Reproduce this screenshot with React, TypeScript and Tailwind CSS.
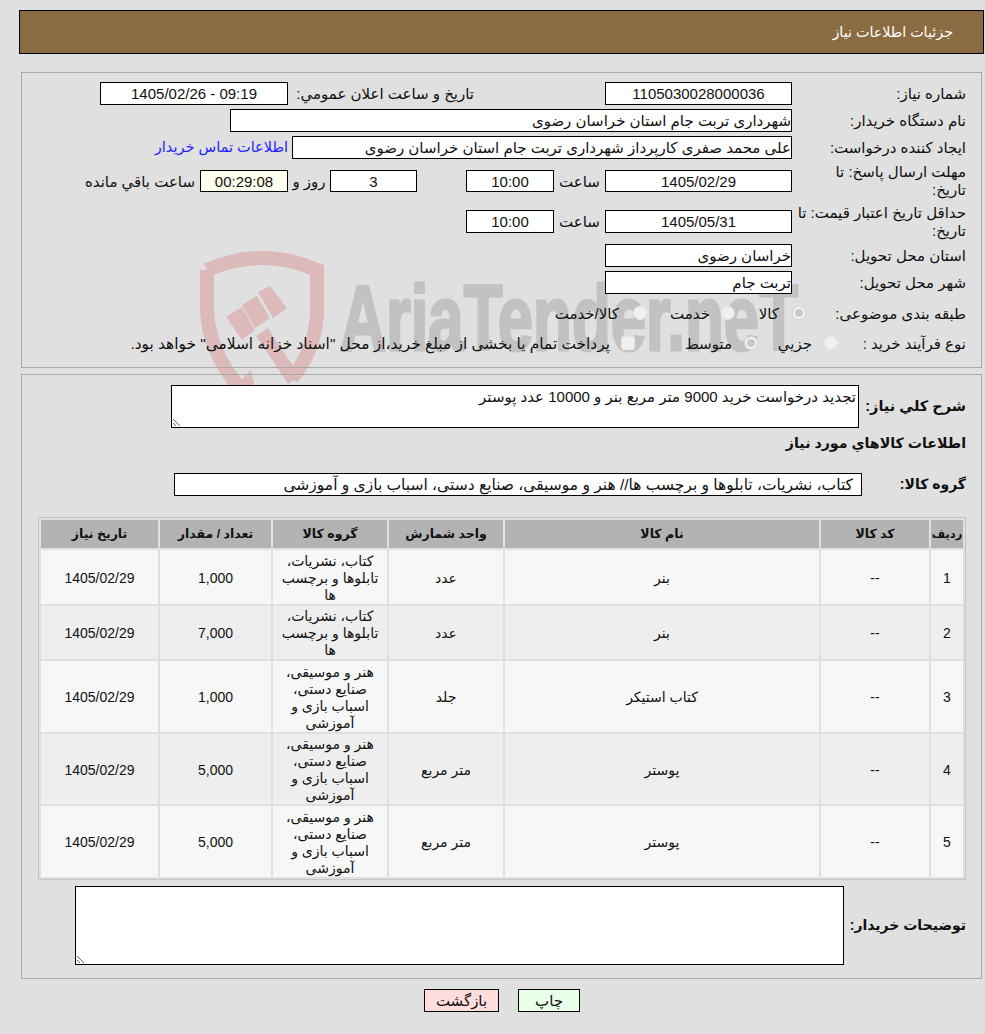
const rows = [
  { id: 1, name: "بنر", unit: "عدد", group: ["کتاب، نشریات،", "تابلوها و برچسب", "ها"], qty: "1,000", rowClass: "h-[54px] bg-[#f7f7f7]" },
  { id: 2, name: "بنر", unit: "عدد", group: ["کتاب، نشریات،", "تابلوها و برچسب", "ها"], qty: "7,000", rowClass: "h-[53px] bg-[#eeeeee]" },
  { id: 3, name: "کتاب استیکر", unit: "جلد", group: ["هنر و موسیقی،", "صنایع دستی،", "اسباب بازی و", "آموزشی"], qty: "1,000", rowClass: "h-[71px] bg-[#f7f7f7]" },
  { id: 4, name: "پوستر", unit: "متر مربع", group: ["هنر و موسیقی،", "صنایع دستی،", "اسباب بازی و", "آموزشی"], qty: "5,000", rowClass: "h-[70px] bg-[#eeeeee]" },
  { id: 5, name: "پوستر", unit: "متر مربع", group: ["هنر و موسیقی،", "صنایع دستی،", "اسباب بازی و", "آموزشی"], qty: "5,000", rowClass: "h-[71px] bg-[#f7f7f7]" },
];

function Box({ className, children }: { className: string; children?: React.ReactNode }) {
  return (
    <div className={"shrink-0 border border-black bg-white flex items-center justify-center h-[23px] " + className}>
      {children}
    </div>
  );
}

function Radio({ checked }: { checked?: boolean }) {
  if (checked) {
    return (
      <span className="shrink-0 w-[14px] h-[14px] rounded-full border border-[#d0d0d0] bg-[#f6f6f6] flex items-center justify-center">
        <span className="w-[8px] h-[8px] rounded-full bg-[#c8c8c8]" />
      </span>
    );
  }
  return <span className="shrink-0 w-[14px] h-[14px] rounded-full border border-[#e6e6e6] bg-[#f0f0f0]" />;
}

function Watermark() {
  return (
    <svg dir="ltr" className="absolute left-[190px] top-[240px]" width="640" height="150" viewBox="0 0 640 150">
      <g fill="none" stroke="#dcbaba" strokeWidth="14">
        <path d="M17 30 Q72 6 127 30 V75 Q124 112 102 138" />
        <path d="M17 30 V72 Q20 115 52 150" />
        <path d="M72 92 L104 140" />
      </g>
      <path
        d="M36 77 L52 67 L65 90 L52 100 Z M52 65 L67 56 L80 78 L65 88 Z M68 52 L80 46 L97 68 L83 78 Z M42 150 L61 130 L66 155 Z"
        fill="#dcbaba"
      />
      <text
        x="150"
        y="110"
        direction="ltr"
        fontFamily="Liberation Sans"
        fontWeight="700"
        fontSize="92"
        fill="#c2c2c2"
        stroke="#c2c2c2"
        strokeWidth="3"
        textLength="458"
        lengthAdjust="spacingAndGlyphs"
      >
        AriaTender.neT
      </text>
    </svg>
  );
}

export default function App() {
  return (
    <div dir="rtl" className="relative w-[985px] h-[1034px] overflow-hidden bg-[#e0e0e0] text-[15px] leading-[17px] text-[#111] font-['Liberation_Sans','DejaVu_Sans',sans-serif]">
      <Watermark />
      <div className="relative flex flex-col">
        <div className="mt-[10px] ml-[19px] mr-[1px] h-[44px] border border-black bg-[#8b6c42] text-white text-[14.3px] flex items-center pr-[30px]">
          جزئیات اطلاعات نیاز
        </div>

        <section className="mt-[18px] ml-[21px] mr-[3px] h-[296px] border border-[#a8a8a8] pt-[9px] pr-[15px]">
          <div className="flex items-center">
            <div className="w-[174px] shrink-0">شماره نیاز:</div>
            <Box className="w-[187px]">1105030028000036</Box>
            <div className="w-[131px] shrink-0" />
            <div className="w-[186px] shrink-0 whitespace-nowrap">تاریخ و ساعت اعلان عمومي:</div>
            <Box className="w-[188px]">09:19 - 1405/02/26</Box>
          </div>
          <div className="flex items-center mt-[4px]">
            <div className="w-[174px] shrink-0">نام دستگاه خریدار:</div>
            <Box className="w-[562px] !justify-start">شهرداری تربت جام استان خراسان رضوی</Box>
          </div>
          <div className="flex items-center mt-[4px]">
            <div className="w-[174px] shrink-0">ایجاد کننده درخواست:</div>
            <Box className="w-[500px] !justify-start">علی محمد صفری کارپرداز شهرداری تربت جام استان خراسان رضوی</Box>
            <a href="#" className="mr-[4px] whitespace-nowrap text-[14.5px] text-[#2222ff]">اطلاعات تماس خریدار</a>
          </div>
          <div className="flex items-center mt-[4px] h-[36px]">
            <div className="w-[174px] shrink-0 leading-[18px]">مهلت ارسال پاسخ: تا<br />تاریخ:</div>
            <Box className="w-[187px] !h-[22px]">1405/02/29</Box>
            <div className="w-[51px] shrink-0 text-center">ساعت</div>
            <Box className="w-[88px] !h-[22px]">10:00</Box>
            <div className="w-[49px] shrink-0" />
            <Box className="w-[87px] !h-[22px]">3</Box>
            <div className="w-[42px] shrink-0 text-center">روز و</div>
            <Box className="w-[88px] !h-[22px] !bg-[#ffffee]">00:29:08</Box>
            <div className="mr-[5px] whitespace-nowrap">ساعت باقي مانده</div>
          </div>
          <div className="flex items-center h-[45px]">
            <div className="w-[174px] shrink-0 leading-[18px]">حداقل تاریخ اعتبار قیمت: تا<br />تاریخ:</div>
            <Box className="w-[187px]">1405/05/31</Box>
            <div className="w-[51px] shrink-0 text-center">ساعت</div>
            <Box className="w-[88px]">10:00</Box>
          </div>
          <div className="flex items-center">
            <div className="w-[174px] shrink-0">استان محل تحویل:</div>
            <Box className="w-[187px] !justify-start">خراسان رضوی</Box>
          </div>
          <div className="flex items-center mt-[4px]">
            <div className="w-[174px] shrink-0">شهر محل تحویل:</div>
            <Box className="w-[187px] !justify-start">تربت جام</Box>
          </div>
          <div className="flex items-center mt-[8px] h-[22px]">
            <div className="w-[160px] shrink-0">طبقه بندی موضوعی:</div>
            <Radio checked />
            <div className="w-[57px] shrink-0 pr-[13px]">کالا</div>
            <Radio />
            <div className="w-[74px] shrink-0 pr-[11px]">خدمت</div>
            <Radio />
            <div className="pr-[14px] whitespace-nowrap">کالا/خدمت</div>
          </div>
          <div className="flex items-center mt-[8px] h-[22px]">
            <div className="w-[128px] shrink-0">نوع فرآیند خرید :</div>
            <Radio />
            <div className="w-[66px] shrink-0 pr-[12px]">جزیي</div>
            <Radio checked />
            <div className="w-[109px] shrink-0 pr-[12px]">متوسط</div>
            <span className="shrink-0 w-[14px] h-[14px] rounded-[3px] border border-[#e6e6e6] bg-[#f0f0f0]" />
            <div className="pr-[11px] whitespace-nowrap text-[15.4px]">پرداخت تمام یا بخشی از مبلغ خرید،از محل "اسناد خزانه اسلامی" خواهد بود.</div>
          </div>
        </section>

        <section className="mt-[6px] ml-[21px] mr-[3px] h-[605px] border border-[#a8a8a8] pt-[10px] pr-[15px] pl-[16px]">
          <div className="flex items-center">
            <div className="w-[107px] shrink-0 font-bold text-[14.5px]">شرح كلي نياز:</div>
            <textarea
              readOnly
              defaultValue="تجدید درخواست خرید 9000 متر مربع بنر و 10000 عدد پوستر"
              className="block w-[688px] h-[43px] border border-black bg-white px-[2px] pt-[2px] outline-none"
            />
          </div>
          <div className="mt-[7px] font-bold text-[14.2px]">اطلاعات کالاهاي مورد نياز</div>
          <div className="flex items-center mt-[21px]">
            <div className="w-[104px] shrink-0 font-bold text-[14px]">گروه کالا:</div>
            <Box className="w-[688px] !justify-start pr-[8px] text-[15.5px]">کتاب، نشریات، تابلوها و برچسب ها// هنر و موسیقی، صنایع دستی، اسباب بازی و آموزشی</Box>
          </div>

          <div className="mt-[21px] border border-[#c4c4c4]">
            <table className="w-full table-fixed border-separate border-spacing-[2px] text-center text-[14px]">
              <colgroup>
                <col className="w-[32px]" />
                <col className="w-[108px]" />
                <col className="w-[314px]" />
                <col className="w-[114px]" />
                <col className="w-[114px]" />
                <col className="w-[111px]" />
                <col />
              </colgroup>
              <thead>
                <tr className="h-[28px] bg-[#b3b3b3] font-bold text-[12.5px]">
                  <th className="whitespace-nowrap text-[11.5px]">ردیف</th>
                  <th>کد کالا</th>
                  <th>نام کالا</th>
                  <th>واحد شمارش</th>
                  <th>گروه کالا</th>
                  <th>تعداد / مقدار</th>
                  <th>تاریخ نیاز</th>
                </tr>
              </thead>
              <tbody className="[&_td]:pt-[2px]">
                {rows.map((r) => (
                  <tr key={r.id} className={r.rowClass}>
                    <td>{r.id}</td>
                    <td>--</td>
                    <td>{r.name}</td>
                    <td>{r.unit}</td>
                    <td>
                      {r.group.map((line) => (
                        <div key={line} className="whitespace-nowrap">{line}</div>
                      ))}
                    </td>
                    <td>{r.qty}</td>
                    <td>1405/02/29</td>
                  </tr>
                ))}
              </tbody>
            </table>
          </div>

          <div className="flex items-center mt-[6px]">
            <div className="w-[122px] shrink-0 font-bold text-[14px] whitespace-nowrap">توضیحات خریدار:</div>
            <textarea readOnly className="block w-[769px] h-[79px] border border-black bg-white outline-none" />
          </div>
        </section>

        <div className="flex justify-center gap-[19px] mt-[10px] pl-[19px]">
          <button className="w-[62px] h-[23px] border border-black bg-[#e8ffe8]">چاپ</button>
          <button className="w-[75px] h-[23px] border border-black bg-[#ffdddd]">بازگشت</button>
        </div>
      </div>
    </div>
  );
}
